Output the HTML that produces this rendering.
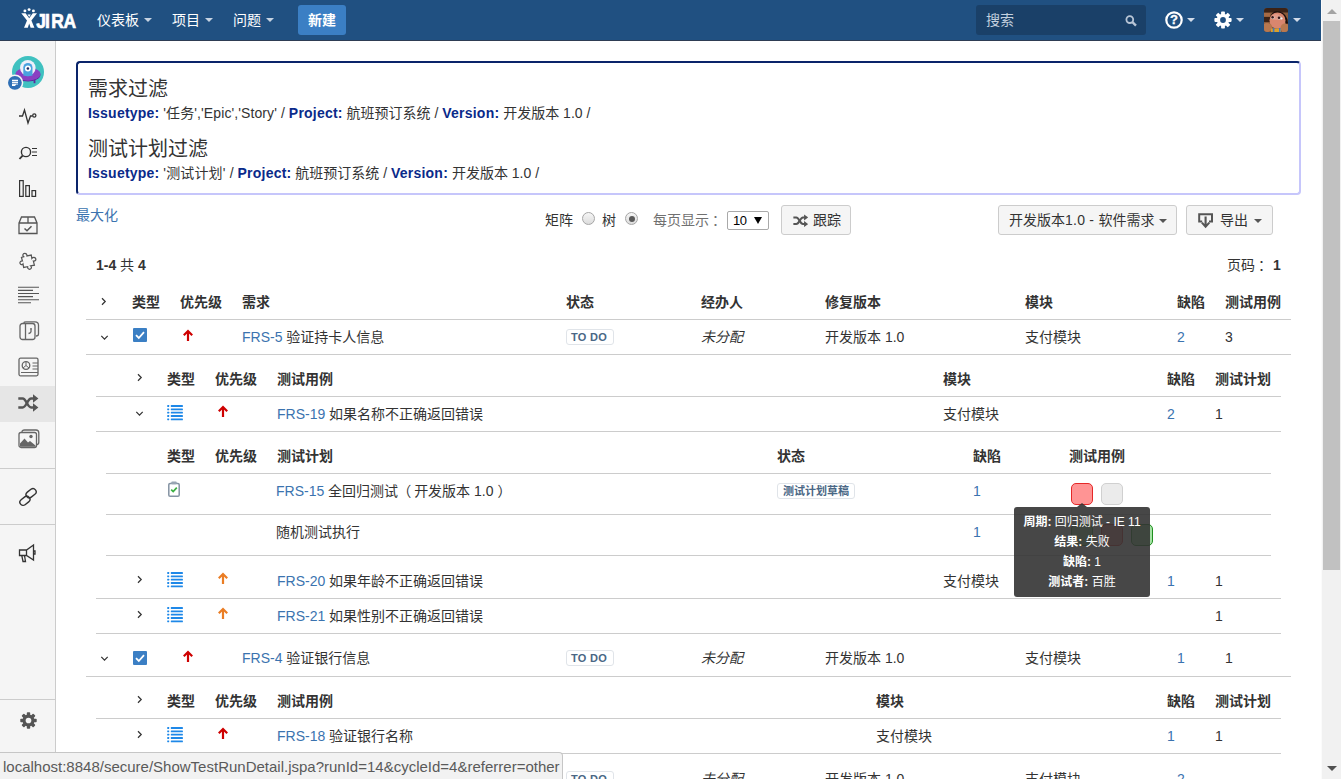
<!DOCTYPE html>
<html lang="zh-CN">
<head>
<meta charset="utf-8">
<title>JIRA</title>
<style>
*{box-sizing:border-box;}
html,body{margin:0;padding:0;}
body{width:1341px;height:779px;overflow:hidden;position:relative;background:#fff;
 font-family:"Liberation Sans","Noto Sans CJK SC",sans-serif;font-size:14px;color:#333;line-height:20px;}
a{color:#3b73af;text-decoration:none;}
#hdr{position:absolute;left:0;top:0;width:1321px;height:41px;background:#205081;color:#fff;border-bottom:1px solid #2e3d54;}
#hdr .nav{position:absolute;top:0;height:41px;line-height:40px;font-size:14px;color:#fff;white-space:nowrap;}
.caret{display:inline-block;width:0;height:0;border-left:4px solid transparent;border-right:4px solid transparent;border-top:4px solid currentColor;vertical-align:middle;margin-left:5px;}
#create{position:absolute;left:298px;top:5px;width:48px;height:30px;background:#3b7fc4;border-radius:3px;color:#fff;font-weight:bold;text-align:center;line-height:31px;font-size:14px;}
#search{position:absolute;left:976px;top:5px;width:170px;height:30px;background:#1a4068;border-radius:3px;color:#c3d0df;line-height:31px;padding-left:10px;font-size:14px;}
#side{position:absolute;left:0;top:41px;width:56px;height:738px;background:#f5f5f5;border-right:1px solid #ccc;}
#side .sel{position:absolute;left:0;top:345px;width:55px;height:36px;background:#e6e6e6;}
#side .sep{position:absolute;left:0;width:55px;height:1px;background:#ccc;}
#sb{position:absolute;left:1321px;top:0;width:20px;height:779px;background:#f1f1f1;border-left:1px solid #fbfbfb;}
#sb .thumb{position:absolute;left:1px;top:21px;width:17px;height:549px;background:#c1c1c1;}
#sb .au{position:absolute;left:5px;top:9px;width:0;height:0;border-left:5px solid transparent;border-right:5px solid transparent;border-bottom:5px solid #a3a3a3;}
#sb .ad{position:absolute;left:5px;top:766px;width:0;height:0;border-left:5px solid transparent;border-right:5px solid transparent;border-top:5px solid #505050;}
#status{position:absolute;left:0;top:752px;width:563px;height:27px;background:#f2f2f2;border-top:1px solid #c6c6c6;border-right:1px solid #c6c6c6;border-top-right-radius:4px;font-family:"Liberation Sans",sans-serif;font-size:15px;color:#5a5a5a;line-height:28px;padding-left:3px;white-space:nowrap;overflow:hidden;}
#main{position:absolute;left:57px;top:41px;width:1266px;height:738px;overflow:hidden;}
#fbox{position:absolute;left:19px;top:20px;width:1225px;height:134px;border:2px solid;border-color:#0a246a #c6c6fb #c6c6fb #0a246a;border-radius:4px;}
#fbox h3{position:absolute;left:10px;margin:0;font-weight:normal;font-size:20px;line-height:26px;color:#333;}
#fbox p{position:absolute;left:10px;margin:0;font-size:14px;line-height:20px;white-space:nowrap;}
#fbox b{color:#0a2a8a;letter-spacing:0.22px;}
.abs{position:absolute;white-space:nowrap;}
.btn{position:absolute;height:30px;border:1px solid #ccc;border-radius:3px;background:#f5f5f5;line-height:28px;font-size:14px;color:#333;white-space:nowrap;}
.row{position:absolute;height:1px;background:#ccc;}
.th{position:absolute;font-weight:bold;color:#333;white-space:nowrap;font-size:14px;line-height:20px;}
.td{position:absolute;white-space:nowrap;font-size:14px;line-height:20px;color:#333;}
.loz{position:absolute;border:1px solid #e0e4e9;border-radius:3px;background:#fff;font-size:11px;font-weight:bold;color:#4a6785;line-height:14px;height:16px;padding:0 4px;white-space:nowrap;}
.radio{position:absolute;width:13px;height:13px;border-radius:50%;border:1px solid #a6a6a6;background:linear-gradient(#f6f6f6,#dcdcdc);}
.radio i{position:absolute;left:2.5px;top:2.5px;width:6px;height:6px;border-radius:50%;background:#5a5a5a;}
.sel10{letter-spacing:-0.6px;width:42px;height:19px;border:1px solid #a9a9a9;border-radius:2px;font-size:13px;line-height:17px;padding-left:5px;color:#000;background:#fff;}
.tip{position:absolute;background:rgba(51,51,51,0.9);border-radius:3px;color:#fff;font-size:12px;line-height:20px;text-align:center;padding-top:5px;white-space:nowrap;}
.tiparrow{position:absolute;left:63px;top:-4px;width:0;height:0;border-left:5px solid transparent;border-right:5px solid transparent;border-bottom:4px solid rgba(51,51,51,0.9);}
.loz.todo{letter-spacing:0.3px;}
.loz.draft{padding-left:5px;}
#hdr .nav .caret{color:#c7d3e2;position:relative;top:-1px;}
.btn .caret{color:#555;}
</style>
</head>
<body>
<div id="hdr">
  <div class="nav" style="left:97px">仪表板<span class="caret"></span></div>
  <div class="nav" style="left:172px">项目<span class="caret"></span></div>
  <div class="nav" style="left:233px">问题<span class="caret"></span></div>
  <div id="create">新建</div>
  <div id="search">搜索</div>

  <svg class="abs" style="left:0;top:0" width="90" height="40" viewBox="0 0 90 40">
    <g fill="#fff">
      <circle cx="29.1" cy="9.6" r="1.45"/><circle cx="24.9" cy="10.9" r="1.45"/><circle cx="33.4" cy="10.9" r="1.45"/>
      <path d="M21.3 13.2 H25.6 L29.2 18.2 L32.8 13.2 H37 L31.4 20.6 L34.4 27.7 H30.6 L29.2 23.6 L27.8 27.7 H24 L27 20.6 Z"/>
      <path d="M27.5 14.4 H30.9 L29.2 16.9 Z"/>
    </g>
    <text transform="scale(0.86,1)" x="42.09 52.33 59.53 73.72" y="27.6" font-family="Liberation Sans, sans-serif" font-weight="bold" font-size="20.3" fill="#fff" stroke="#fff" stroke-width="0.7">JIRA</text>
  </svg>
  <svg class="abs" style="left:1125px;top:15px" width="13" height="12" viewBox="0 0 13 12" fill="none" stroke="#b8c5d6"><circle cx="4.8" cy="4.6" r="3.4" stroke-width="1.8"/><path d="M7.4 7.2 L11 10.6" stroke-width="2.4"/></svg>
  <svg class="abs" style="left:1165px;top:11px" width="18" height="18" viewBox="0 0 18 18"><circle cx="9" cy="9" r="7.7" fill="none" stroke="#fff" stroke-width="2.2"/>
    <text x="9" y="13.4" text-anchor="middle" font-family="Liberation Sans, sans-serif" font-weight="bold" font-size="13" fill="#fff" stroke="#fff" stroke-width="0.3">?</text></svg>
  <span class="caret abs" style="left:1182px;top:18px;color:#d2dcea"></span>
  <svg class="abs" style="left:1214px;top:11px" width="18" height="18" viewBox="0 0 18 18">
    <g fill="#fff"><circle cx="9" cy="9" r="6.2"/><rect x="7.1" y="0.4" width="3.8" height="17.2" rx="0.8"/>
    <rect x="7.1" y="0.4" width="3.8" height="17.2" rx="0.8" transform="rotate(45 9 9)"/><rect x="7.1" y="0.4" width="3.8" height="17.2" rx="0.8" transform="rotate(90 9 9)"/><rect x="7.1" y="0.4" width="3.8" height="17.2" rx="0.8" transform="rotate(135 9 9)"/></g>
    <circle cx="9" cy="9" r="2.9" fill="#205081"/></svg>
  <span class="caret abs" style="left:1231px;top:18px;color:#d2dcea"></span>
  <svg class="abs" style="left:1264px;top:8px;border-radius:3px" width="24" height="24" viewBox="0 0 24 24">
    <defs><filter id="bl" x="-20%" y="-20%" width="140%" height="140%"><feGaussianBlur stdDeviation="0.7"/></filter></defs>
    <rect width="24" height="24" fill="#8a5a3a"/>
    <g filter="url(#bl)">
    <rect x="-2" y="-2" width="28" height="6.5" fill="#3a2016"/>
    <rect x="-2" y="9" width="8" height="5" fill="#3b2218"/>
    <rect x="-1" y="5" width="7" height="3.5" fill="#a56a44"/>
    <path d="M6 9 Q8 2.5 15 3.5 Q23 5 24 15 L22 18 Q21 8 14 6 Q9 5 6 9 Z" fill="#1a0f0c"/>
    <ellipse cx="13.5" cy="12.5" rx="8" ry="8" fill="#d9866e"/>
    <ellipse cx="12" cy="9" rx="4" ry="3" fill="#e49a88"/>
    <ellipse cx="8.8" cy="9.6" rx="1.9" ry="1.7" fill="#d8c8bc"/><ellipse cx="15.6" cy="10" rx="2.2" ry="1.8" fill="#d8c8bc"/>
    <circle cx="8.6" cy="9.2" r="1.2" fill="#3a1418"/><circle cx="15" cy="9.7" r="1.3" fill="#3a1418"/>
    <circle cx="17.6" cy="10.6" r="1" fill="#f4f4f4"/>
    <ellipse cx="3" cy="19.5" rx="5" ry="4.5" fill="#b87850"/><ellipse cx="21" cy="20" rx="4.5" ry="4.5" fill="#b87850"/>
    <rect x="7" y="20.5" width="10" height="5" fill="#d9a02c"/><rect x="8.8" y="20" width="1.6" height="5" fill="#3f78c0"/><rect x="15" y="20" width="1.6" height="5" fill="#3f78c0"/>
    </g>
  </svg>
  <span class="caret abs" style="left:1288px;top:18px;color:#d2dcea"></span>
</div>
<div id="side">
<div class="sel"></div>
<div class="sep" style="top:427px"></div><div class="sep" style="top:483px"></div><div class="sep" style="top:658px"></div>
<!-- project avatar -->
<svg class="abs" style="left:8px;top:13px" width="40" height="40" viewBox="0 0 40 40">
<circle cx="20" cy="18" r="16" fill="#3fc1c0"/>
<ellipse cx="20" cy="20.8" rx="12.4" ry="6.6" fill="#5b2a9c"/>
<ellipse cx="20" cy="20" rx="12.4" ry="6.4" fill="#8a40c2"/>
<rect x="25.6" y="25" width="1.8" height="4.2" fill="#5b2a9c"/>
<circle cx="19.8" cy="13.8" r="7.8" fill="#eef0fa"/>
<path d="M15.3 21.6 V13.6 a4.6 4.6 0 0 1 9.2 0 V21.6 Q19.9 23.2 15.3 21.6 Z" fill="#4aa3df"/>
<path d="M8 21 Q19.9 24.4 32 21 Q30 26.4 19.9 26.4 Q10 26.4 8 21 Z" fill="#8a40c2"/>
<circle cx="19.9" cy="14.5" r="3" fill="#fff"/><circle cx="19.9" cy="14.5" r="1.3" fill="#1c2a66"/>
<circle cx="6.9" cy="28.8" r="8.4" fill="#f5f5f5"/><circle cx="6.9" cy="28.8" r="6.9" fill="#2f6fb5"/>
<path d="M4 25.8 H10 V30.6 H8.2 L7 31.9 H4 Z" fill="#fff"/><path d="M4 27.6 H10 M4 29.6 H10" stroke="#2f6fb5" stroke-width="0.7"/>
</svg>
<!-- pulse -->
<svg class="abs" style="left:18px;top:66px" width="20" height="20" viewBox="0 0 20 20" fill="none" stroke="#333" stroke-width="1.3">
<path d="M1 9 H4.5 L6.5 3 L10 16 L12.5 9 H14.5"/><circle cx="16.3" cy="8.5" r="1.6"/></svg>
<!-- search list -->
<svg class="abs" style="left:18px;top:102px" width="20" height="20" viewBox="0 0 20 20" fill="none" stroke="#333" stroke-width="1.4">
<circle cx="8" cy="9" r="4.6"/><path d="M4.6 12.6 L1.5 16" stroke-width="1.8"/><path d="M14 5.5 H19 M14 9 H19 M14 12.5 H19" stroke-width="1.1"/></svg>
<!-- bars -->
<svg class="abs" style="left:18px;top:138px" width="20" height="20" viewBox="0 0 20 20" fill="none" stroke="#333" stroke-width="1.2">
<rect x="1.6" y="1.6" width="3.6" height="15.8"/><rect x="7.8" y="6.6" width="3.6" height="10.8"/><rect x="14" y="11.6" width="3.6" height="5.8"/></svg>
<!-- box check -->
<svg class="abs" style="left:18px;top:174px" width="20" height="20" viewBox="0 0 20 20" fill="none" stroke="#555" stroke-width="1.3">
<path d="M1 8 L3.5 2 H16.5 L19 8 V18.5 H1 Z M1 8 H19 M10 2 V8"/><path d="M6.5 13.5 L9 15.8 L13.5 11.2" stroke-width="1.5"/></svg>
<!-- puzzle -->
<svg class="abs" style="left:18px;top:210px;transform:rotate(-22deg) scale(0.95)" width="20" height="20" viewBox="0 0 20 20" fill="none" stroke="#555" stroke-width="1.3">
<path d="M7.5 4.2 C6.5 2.2 8 0.8 9.6 1.2 C11.3 1.6 11.6 3.2 11 4.6 L15.5 5.5 L14.8 9 C16.5 8 18.2 8.6 18.4 10.4 C18.6 12.2 17 13.2 15.2 12.2 L14.6 16.6 L10.6 15.8 C11.4 17.4 10.6 18.9 8.8 18.8 C7 18.7 6.6 16.8 7.4 15.4 L3.2 14.6 L4 10.8 C2.6 11.6 1.2 10.8 1.3 9.2 C1.4 7.6 3 7 4.6 7.8 L5 4 Z"/></svg>
<!-- lines -->
<svg class="abs" style="left:18px;top:244px" width="22" height="20" viewBox="0 0 22 20" fill="none" stroke="#555" stroke-width="1.1">
<path d="M0 2.3 H21 M0 5.4 H15 M0 8.5 H21 M0 11.6 H15 M0 14.7 H21 M0 17.8 H13"/></svg>
<!-- music book -->
<svg class="abs" style="left:18px;top:280px" width="22" height="20" viewBox="0 0 22 20" fill="none" stroke="#666" stroke-width="1.3">
<rect x="2" y="2.5" width="15" height="16" rx="2.5"/><path d="M6 2 Q6 0.8 8 0.8 H17 Q20.5 0.8 20.5 4 V13 Q20.5 15 18 15"/><path d="M7.5 2.5 V18.5"/><path d="M10.5 12.5 Q13.5 12 13 8.8" /><circle cx="13" cy="8" r="1" fill="#666" stroke="none"/></svg>
<!-- report -->
<svg class="abs" style="left:18px;top:316px" width="22" height="20" viewBox="0 0 22 20" fill="none" stroke="#666" stroke-width="1.3">
<rect x="1" y="1.2" width="19" height="17.6" rx="1.5"/><circle cx="8" cy="8.5" r="3.8"/><path d="M8 4.7 V8.5 L5 11 M8 8.5 L11 11" stroke-width="1"/><path d="M14.5 6 H20 M14.5 9 H20 M14.5 12 H20 M3 15.5 H20" stroke-width="1.1"/></svg>
<!-- shuffle -->
<svg class="abs" style="left:18px;top:352.4px" width="21" height="20" viewBox="0 0 21 20" fill="none" stroke="#555" stroke-width="2.5">
<path d="M0.3 5.5 H4.6 C8.4 5.5 9.4 14.5 13.2 14.5 H16"/><path d="M0.3 14.5 H4.6 C8.4 14.5 9.4 5.5 13.2 5.5 H16"/><path d="M15 1.3 L20.4 5.5 L15 9.7 Z M15 10.3 L20.4 14.5 L15 18.7 Z" fill="#555" stroke="none"/></svg>
<!-- image -->
<svg class="abs" style="left:18px;top:388px" width="22" height="20" viewBox="0 0 22 20" fill="none" stroke="#666" stroke-width="1.3">
<rect x="1" y="3.5" width="17.5" height="15" rx="2"/><path d="M4 3 Q4 1 6.5 1 H18 Q20.8 1 20.8 4 V13 Q20.8 15.5 19 15.5"/><path d="M2 17.8 V14.5 L6.5 9.5 L10 13.5 L12 12 L17.5 16.5 V17.8 Z" fill="#666" stroke="none"/><circle cx="13" cy="7.5" r="1.7" fill="#666" stroke="none"/></svg>
<!-- link -->
<svg class="abs" style="left:18px;top:446px" width="20" height="20" viewBox="0 0 20 20" fill="none" stroke="#333" stroke-width="1.4">
<rect x="7.6" y="3" width="11" height="6.4" rx="3.2" transform="rotate(-38 13.1 6.2)"/><rect x="1.4" y="10.6" width="11" height="6.4" rx="3.2" transform="rotate(-38 6.9 13.8)"/></svg>
<!-- megaphone -->
<svg class="abs" style="left:18px;top:502px" width="20" height="20" viewBox="0 0 20 20" fill="none" stroke="#333" stroke-width="1.3">
<path d="M1.5 7 H8.5 L15.5 2 V17 L8.5 12.5 H1.5 Z M8.5 7 V12.5"/><path d="M3.8 12.5 L5 18.5 H7.5 L6.5 12.5"/><path d="M15.5 8 H17 V11 H15.5"/></svg>
<!-- gear -->
<svg class="abs" style="left:19.6px;top:670.6px" width="17" height="17" viewBox="0 0 18 18">
<g fill="#555"><circle cx="9" cy="9" r="6.3"/>
<rect x="7.2" y="0.3" width="3.6" height="17.4" rx="0.8"/>
<rect x="7.2" y="0.3" width="3.6" height="17.4" rx="0.8" transform="rotate(45 9 9)"/><rect x="7.2" y="0.3" width="3.6" height="17.4" rx="0.8" transform="rotate(90 9 9)"/><rect x="7.2" y="0.3" width="3.6" height="17.4" rx="0.8" transform="rotate(135 9 9)"/></g>
<circle cx="9" cy="9" r="3" fill="#f5f5f5"/></svg>
</div>
<div id="main">
  <div id="fbox">
    <h3 style="top:13px">需求过滤</h3>
    <p style="top:40px"><b>Issuetype:</b> <span style="letter-spacing:0.1px">'任务','Epic','Story' /</span> <b>Project:</b> 航班预订系统 / <b>Version:</b> 开发版本 1.0 /</p>
    <h3 style="top:73px">测试计划过滤</h3>
    <p style="top:100px"><b>Issuetype:</b> <span style="letter-spacing:0.15px">'测试计划' /</span> <b>Project:</b> 航班预订系统 / <b>Version:</b> 开发版本 1.0 /</p>
  </div>
</div>
<div id="content">
<a class="abs" style="left:76px;top:205px;font-size:14px">最大化</a>
<div class="td" style="left:545px;top:210px;">矩阵</div>
<div class="td" style="left:602px;top:210px;">树</div>
<div class="td" style="left:653px;top:210px;color:#707070">每页显示<span style="position:relative;left:3px">：</span></div>
<div class="radio" style="left:582px;top:212px"></div>
<div class="radio on" style="left:625px;top:212px"><i></i></div>
<div class="abs sel10" style="left:727px;top:211px">10<svg style="position:absolute;left:26px;top:5px" width="8" height="7" viewBox="0 0 8 7"><path d="M0 0 H8 L4 7 Z" fill="#000"/></svg></div>
<div class="btn" style="left:781px;top:205px;width:70px;padding-left:31px"><svg style="position:absolute;left:10.5px;top:7.5px" width="15.5" height="13.5" viewBox="0 0 21 18" fill="none" stroke="#555" stroke-width="2.8">
<path d="M0.5 4.5 H4.5 C8.5 4.5 9.5 13.5 13.5 13.5 H16"/><path d="M0.5 13.5 H4.5 C8.5 13.5 9.5 4.5 13.5 4.5 H16"/><path d="M15 0.5 L20.5 4.5 L15 8.5 Z M15 9.5 L20.5 13.5 L15 17.5 Z" fill="#555" stroke="none"/></svg>跟踪</div>
<div class="btn" style="left:998px;top:205px;width:179px;padding-left:10px">开发版本<span style="letter-spacing:0.25px">1.0 - </span>软件需求<span class="caret"></span></div>
<div class="btn" style="left:1186px;top:205px;width:87px;padding-left:33px"><svg style="position:absolute;left:10px;top:6px" width="18" height="18" viewBox="0 0 18 18" fill="none" stroke="#555" stroke-width="2"><path d="M5.2 9.6 H2.2 V2.2 H15 V9.6 H12"/><path d="M8.6 4.6 V14 M4.9 10.6 L8.6 14.6 L12.3 10.6" stroke-width="2.1"/></svg>导出<span class="caret" style="margin-left:6px"></span></div>
<div class="td" style="left:96px;top:255px;"><b>1-4</b> 共 <b>4</b></div>
<div class="td" style="left:1227px;top:255px;">页码<span style="position:relative;left:3px">：</span> <b>1</b></div>
<svg class="abs" style="left:99.35px;top:297.40px" width="9" height="9" viewBox="0 0 9 9"><path d="M3 1.3 L6.2 4.5 L3 7.7" fill="none" stroke="#333" stroke-width="1.25"/></svg>
<div class="th" style="left:132px;top:292px">类型</div>
<div class="th" style="left:180px;top:292px">优先级</div>
<div class="th" style="left:242px;top:292px">需求</div>
<div class="th" style="left:566px;top:292px">状态</div>
<div class="th" style="left:701px;top:292px">经办人</div>
<div class="th" style="left:825px;top:292px">修复版本</div>
<div class="th" style="left:1025px;top:292px">模块</div>
<div class="th" style="left:1177px;top:292px">缺陷</div>
<div class="th" style="left:1225px;top:292px">测试用例</div>
<div class="row" style="left:86px;top:319px;width:1205px"></div>
<svg class="abs" style="left:100.35px;top:333.10px" width="9" height="9" viewBox="0 0 9 9"><path d="M1.3 2.9 L4.5 6.1 L7.7 2.9" fill="none" stroke="#333" stroke-width="1.25"/></svg>
<svg class="abs" style="left:133px;top:328px" width="14" height="14" viewBox="0 0 14 14"><rect x="0" y="0" width="14" height="14" rx="1" fill="#3b7fc4"/><path d="M3 7.2 L5.8 10 L11 4.2" fill="none" stroke="#fff" stroke-width="1.8"/></svg>
<svg class="abs" style="left:182px;top:328px" width="12" height="16" viewBox="0 0 12 16"><path d="M6 3 V13 M1.8 7.2 L6 3 L10.2 7.2" fill="none" stroke="#ce0000" stroke-width="2.2"/></svg>
<div class="td" style="left:242px;top:327px;"><a>FRS-5</a> 验证持卡人信息</div>
<div class="loz todo" style="left:566px;top:329px;width:48px">TO DO</div>
<div class="td" style="left:701px;top:327px;"><i>未分配</i></div>
<div class="td" style="left:825px;top:327px;">开发版本 1.0</div>
<div class="td" style="left:1025px;top:327px;">支付模块</div>
<div class="td" style="left:1177px;top:327px;"><a>2</a></div>
<div class="td" style="left:1225px;top:327px;">3</div>
<div class="row" style="left:86px;top:354px;width:1205px"></div>
<svg class="abs" style="left:134.65px;top:373.40px" width="9" height="9" viewBox="0 0 9 9"><path d="M3 1.3 L6.2 4.5 L3 7.7" fill="none" stroke="#333" stroke-width="1.25"/></svg>
<div class="th" style="left:167px;top:369px">类型</div>
<div class="th" style="left:215px;top:369px">优先级</div>
<div class="th" style="left:277px;top:369px">测试用例</div>
<div class="th" style="left:943px;top:369px">模块</div>
<div class="th" style="left:1167px;top:369px">缺陷</div>
<div class="th" style="left:1215px;top:369px">测试计划</div>
<div class="row" style="left:96px;top:396px;width:1185px"></div>
<svg class="abs" style="left:134.95px;top:409.10px" width="9" height="9" viewBox="0 0 9 9"><path d="M1.3 2.9 L4.5 6.1 L7.7 2.9" fill="none" stroke="#333" stroke-width="1.25"/></svg>
<svg class="abs" style="left:167px;top:404.6px" width="16" height="16" viewBox="0 0 16 16"><g fill="#1e88e8"><rect x="0.2" y="0.10" width="2" height="1.8" rx="0.4"/><rect x="3.8" y="0.10" width="12.1" height="1.8" rx="0.5"/><rect x="0.2" y="3.43" width="2" height="1.8" rx="0.4"/><rect x="3.8" y="3.43" width="12.1" height="1.8" rx="0.5"/><rect x="0.2" y="6.76" width="2" height="1.8" rx="0.4"/><rect x="3.8" y="6.76" width="12.1" height="1.8" rx="0.5"/><rect x="0.2" y="10.09" width="2" height="1.8" rx="0.4"/><rect x="3.8" y="10.09" width="12.1" height="1.8" rx="0.5"/><rect x="0.2" y="13.42" width="2" height="1.8" rx="0.4"/><rect x="3.8" y="13.42" width="12.1" height="1.8" rx="0.5"/></g></svg>
<svg class="abs" style="left:217px;top:404px" width="12" height="16" viewBox="0 0 12 16"><path d="M6 3 V13 M1.8 7.2 L6 3 L10.2 7.2" fill="none" stroke="#ce0000" stroke-width="2.2"/></svg>
<div class="td" style="left:277px;top:404px;"><a>FRS-19</a> 如果名称不正确返回错误</div>
<div class="td" style="left:943px;top:404px;">支付模块</div>
<div class="td" style="left:1167px;top:404px;"><a>2</a></div>
<div class="td" style="left:1215px;top:404px;">1</div>
<div class="row" style="left:96px;top:431px;width:1185px"></div>
<div class="th" style="left:167px;top:446px">类型</div>
<div class="th" style="left:215px;top:446px">优先级</div>
<div class="th" style="left:277px;top:446px">测试计划</div>
<div class="th" style="left:777px;top:446px">状态</div>
<div class="th" style="left:973px;top:446px">缺陷</div>
<div class="th" style="left:1069px;top:446px">测试用例</div>
<div class="row" style="left:106px;top:473px;width:1165px"></div>
<svg class="abs" style="left:168px;top:481px" width="12" height="16" viewBox="0 0 12 16" fill="none"><rect x="0.8" y="2.4" width="10.4" height="12.8" rx="1.3" stroke="#8493a3" stroke-width="1.5"/><rect x="3.2" y="0.6" width="5.6" height="2.6" rx="1.1" fill="#98a5b3"/><path d="M3.2 8.6 L5.2 10.6 L8.8 6.6" stroke="#3cb043" stroke-width="1.7"/></svg>
<div class="td" style="left:276px;top:481px;"><a>FRS-15</a> 全回归测试<span style="margin-left:-1px;margin-right:3px">（</span>开发版本 1.0<span style="margin-left:4px">）</span></div>
<div class="loz draft" style="left:777px;top:482.5px;width:78px">测试计划草稿</div>
<div class="td" style="left:973px;top:481px;"><a>1</a></div>
<div class="abs" style="left:1071px;top:483px;width:22px;height:22px;border-radius:5px;background:#ff9494;border:1px solid #e52828"></div>
<div class="abs" style="left:1101px;top:483px;width:22px;height:22px;border-radius:5px;background:#ebebeb;border:1px solid #d0d0d0"></div>
<div class="row" style="left:106px;top:514px;width:1165px"></div>
<div class="td" style="left:276px;top:522px;">随机测试执行</div>
<div class="td" style="left:973px;top:522px;"><a>1</a></div>
<div class="abs" style="left:1071px;top:524px;width:22px;height:22px;border-radius:5px;background:#a6e3a6;border:1px solid #2aa02a"></div>
<div class="abs" style="left:1101px;top:524px;width:22px;height:22px;border-radius:5px;background:#ff9494;border:1px solid #e52828"></div>
<div class="abs" style="left:1131px;top:524px;width:22px;height:22px;border-radius:5px;background:#a6e3a6;border:1px solid #1f8f1f"></div>
<div class="row" style="left:106px;top:555px;width:1165px"></div>
<svg class="abs" style="left:134.65px;top:575.40px" width="9" height="9" viewBox="0 0 9 9"><path d="M3 1.3 L6.2 4.5 L3 7.7" fill="none" stroke="#333" stroke-width="1.25"/></svg>
<svg class="abs" style="left:167px;top:571.6px" width="16" height="16" viewBox="0 0 16 16"><g fill="#1e88e8"><rect x="0.2" y="0.10" width="2" height="1.8" rx="0.4"/><rect x="3.8" y="0.10" width="12.1" height="1.8" rx="0.5"/><rect x="0.2" y="3.43" width="2" height="1.8" rx="0.4"/><rect x="3.8" y="3.43" width="12.1" height="1.8" rx="0.5"/><rect x="0.2" y="6.76" width="2" height="1.8" rx="0.4"/><rect x="3.8" y="6.76" width="12.1" height="1.8" rx="0.5"/><rect x="0.2" y="10.09" width="2" height="1.8" rx="0.4"/><rect x="3.8" y="10.09" width="12.1" height="1.8" rx="0.5"/><rect x="0.2" y="13.42" width="2" height="1.8" rx="0.4"/><rect x="3.8" y="13.42" width="12.1" height="1.8" rx="0.5"/></g></svg>
<svg class="abs" style="left:217px;top:571px" width="12" height="16" viewBox="0 0 12 16"><path d="M6 3 V13 M1.8 7.2 L6 3 L10.2 7.2" fill="none" stroke="#ea7d24" stroke-width="2.2"/></svg>
<div class="td" style="left:277px;top:571px;"><a>FRS-20</a> 如果年龄不正确返回错误</div>
<div class="td" style="left:943px;top:571px;">支付模块</div>
<div class="td" style="left:1167px;top:571px;"><a>1</a></div>
<div class="td" style="left:1215px;top:571px;">1</div>
<div class="row" style="left:96px;top:598px;width:1185px"></div>
<svg class="abs" style="left:134.65px;top:610.40px" width="9" height="9" viewBox="0 0 9 9"><path d="M3 1.3 L6.2 4.5 L3 7.7" fill="none" stroke="#333" stroke-width="1.25"/></svg>
<svg class="abs" style="left:167px;top:606.6px" width="16" height="16" viewBox="0 0 16 16"><g fill="#1e88e8"><rect x="0.2" y="0.10" width="2" height="1.8" rx="0.4"/><rect x="3.8" y="0.10" width="12.1" height="1.8" rx="0.5"/><rect x="0.2" y="3.43" width="2" height="1.8" rx="0.4"/><rect x="3.8" y="3.43" width="12.1" height="1.8" rx="0.5"/><rect x="0.2" y="6.76" width="2" height="1.8" rx="0.4"/><rect x="3.8" y="6.76" width="12.1" height="1.8" rx="0.5"/><rect x="0.2" y="10.09" width="2" height="1.8" rx="0.4"/><rect x="3.8" y="10.09" width="12.1" height="1.8" rx="0.5"/><rect x="0.2" y="13.42" width="2" height="1.8" rx="0.4"/><rect x="3.8" y="13.42" width="12.1" height="1.8" rx="0.5"/></g></svg>
<svg class="abs" style="left:217px;top:606px" width="12" height="16" viewBox="0 0 12 16"><path d="M6 3 V13 M1.8 7.2 L6 3 L10.2 7.2" fill="none" stroke="#ea7d24" stroke-width="2.2"/></svg>
<div class="td" style="left:277px;top:606px;"><a>FRS-21</a> 如果性别不正确返回错误</div>
<div class="td" style="left:1215px;top:606px;">1</div>
<div class="row" style="left:96px;top:633px;width:1185px"></div>
<svg class="abs" style="left:100.35px;top:654.10px" width="9" height="9" viewBox="0 0 9 9"><path d="M1.3 2.9 L4.5 6.1 L7.7 2.9" fill="none" stroke="#333" stroke-width="1.25"/></svg>
<svg class="abs" style="left:133px;top:650.5px" width="14" height="14" viewBox="0 0 14 14"><rect x="0" y="0" width="14" height="14" rx="1" fill="#3b7fc4"/><path d="M3 7.2 L5.8 10 L11 4.2" fill="none" stroke="#fff" stroke-width="1.8"/></svg>
<svg class="abs" style="left:182px;top:649px" width="12" height="16" viewBox="0 0 12 16"><path d="M6 3 V13 M1.8 7.2 L6 3 L10.2 7.2" fill="none" stroke="#ce0000" stroke-width="2.2"/></svg>
<div class="td" style="left:242px;top:648px;"><a>FRS-4</a> 验证银行信息</div>
<div class="loz todo" style="left:566px;top:650px;width:48px">TO DO</div>
<div class="td" style="left:701px;top:648px;"><i>未分配</i></div>
<div class="td" style="left:825px;top:648px;">开发版本 1.0</div>
<div class="td" style="left:1025px;top:648px;">支付模块</div>
<div class="td" style="left:1177px;top:648px;"><a>1</a></div>
<div class="td" style="left:1225px;top:648px;">1</div>
<div class="row" style="left:86px;top:676px;width:1205px"></div>
<svg class="abs" style="left:134.65px;top:695.40px" width="9" height="9" viewBox="0 0 9 9"><path d="M3 1.3 L6.2 4.5 L3 7.7" fill="none" stroke="#333" stroke-width="1.25"/></svg>
<div class="th" style="left:167px;top:691px">类型</div>
<div class="th" style="left:215px;top:691px">优先级</div>
<div class="th" style="left:277px;top:691px">测试用例</div>
<div class="th" style="left:876px;top:691px">模块</div>
<div class="th" style="left:1167px;top:691px">缺陷</div>
<div class="th" style="left:1215px;top:691px">测试计划</div>
<div class="row" style="left:96px;top:718px;width:1185px"></div>
<svg class="abs" style="left:134.65px;top:730.40px" width="9" height="9" viewBox="0 0 9 9"><path d="M3 1.3 L6.2 4.5 L3 7.7" fill="none" stroke="#333" stroke-width="1.25"/></svg>
<svg class="abs" style="left:167px;top:726.6px" width="16" height="16" viewBox="0 0 16 16"><g fill="#1e88e8"><rect x="0.2" y="0.10" width="2" height="1.8" rx="0.4"/><rect x="3.8" y="0.10" width="12.1" height="1.8" rx="0.5"/><rect x="0.2" y="3.43" width="2" height="1.8" rx="0.4"/><rect x="3.8" y="3.43" width="12.1" height="1.8" rx="0.5"/><rect x="0.2" y="6.76" width="2" height="1.8" rx="0.4"/><rect x="3.8" y="6.76" width="12.1" height="1.8" rx="0.5"/><rect x="0.2" y="10.09" width="2" height="1.8" rx="0.4"/><rect x="3.8" y="10.09" width="12.1" height="1.8" rx="0.5"/><rect x="0.2" y="13.42" width="2" height="1.8" rx="0.4"/><rect x="3.8" y="13.42" width="12.1" height="1.8" rx="0.5"/></g></svg>
<svg class="abs" style="left:217px;top:726px" width="12" height="16" viewBox="0 0 12 16"><path d="M6 3 V13 M1.8 7.2 L6 3 L10.2 7.2" fill="none" stroke="#ce0000" stroke-width="2.2"/></svg>
<div class="td" style="left:277px;top:726px;"><a>FRS-18</a> 验证银行名称</div>
<div class="td" style="left:876px;top:726px;">支付模块</div>
<div class="td" style="left:1167px;top:726px;"><a>1</a></div>
<div class="td" style="left:1215px;top:726px;">1</div>
<div class="row" style="left:96px;top:753px;width:1185px"></div>
<div class="loz todo" style="left:566px;top:770.5px;width:48px">TO DO</div>
<div class="td" style="left:701px;top:768.5px;"><i>未分配</i></div>
<div class="td" style="left:825px;top:768.5px;">开发版本 1.0</div>
<div class="td" style="left:1025px;top:768.5px;">支付模块</div>
<div class="td" style="left:1177px;top:768.5px;"><a>2</a></div>
<div class="tip" style="left:1014px;top:507px;width:136px;height:90px">
<div class="tiparrow"></div>
<div><b>周期:</b> 回归测试 - IE 11</div><div><b>结果:</b> 失败</div><div><b>缺陷:</b> 1</div><div><b>测试者:</b> 百胜</div></div>
</div>
<div id="sb"><div class="au"></div><div class="thumb"></div><div class="ad"></div></div>
<div id="status">localhost:8848/secure/ShowTestRunDetail.jspa?runId=14&amp;cycleId=4&amp;referrer=other</div>
</body>
</html>
